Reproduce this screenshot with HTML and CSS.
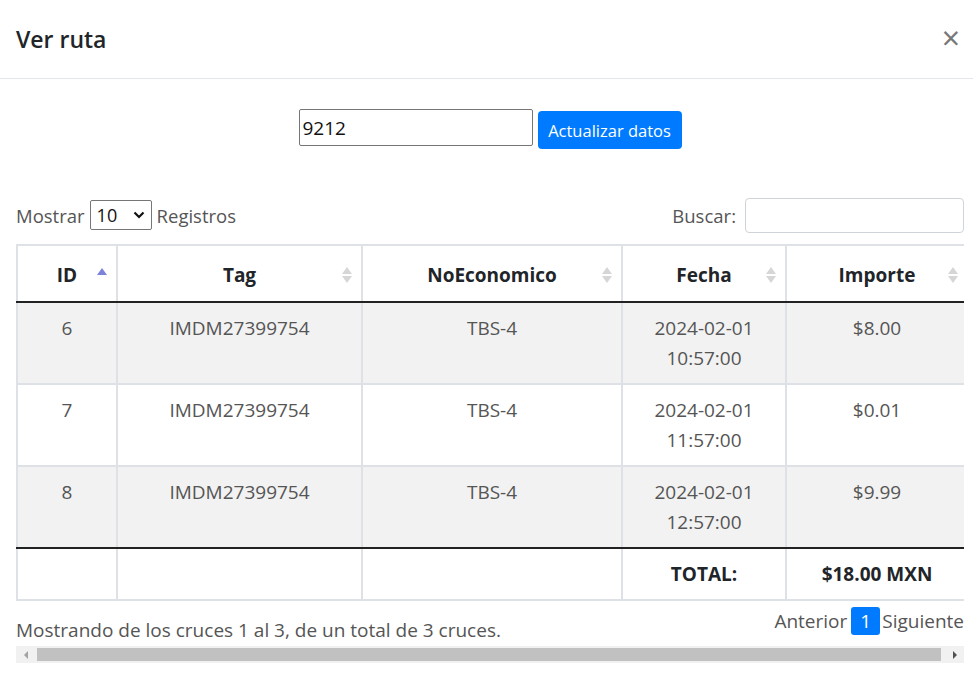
FILE: index.html
```html
<!DOCTYPE html>
<html lang="es">
<head>
<meta charset="utf-8">
<title>Ver ruta</title>
<link rel="stylesheet" href="styles.css">
</head>
<body>
<div class="modal">
  <div class="modal-header">
    <h5 class="modal-title">Ver ruta</h5>
    <span class="close">&times;</span>
  </div>
  <div class="modal-body">
    <div class="search-row">
      <input class="route-input" type="text" value="9212">
      <button class="btn-primary">Actualizar datos</button>
    </div>
    <div class="dt-wrapper">
      <div class="dt-inner">
        <div class="dt-controls">
          <label class="dt-length">Mostrar
            <span class="fake-select">10
              <svg class="chev" width="12" height="8" viewBox="0 0 12 8"><path d="M1.5 1.5 L6 6 L10.5 1.5" fill="none" stroke="#111" stroke-width="2.2"/></svg>
            </span>
            Registros</label>
          <label class="dt-filter">Buscar: <input class="filter-input" type="text"></label>
        </div>
        <table class="dt-table">
          <colgroup>
            <col class="c-id"><col class="c-tag"><col class="c-eco"><col class="c-fecha"><col class="c-imp">
          </colgroup>
          <thead>
            <tr>
              <th>ID<span class="sort"><span class="up active"></span></span></th>
              <th>Tag<span class="sort"><span class="up"></span><span class="down"></span></span></th>
              <th>NoEconomico<span class="sort"><span class="up"></span><span class="down"></span></span></th>
              <th>Fecha<span class="sort"><span class="up"></span><span class="down"></span></span></th>
              <th>Importe<span class="sort"><span class="up"></span><span class="down"></span></span></th>
            </tr>
          </thead>
          <tbody>
            <tr class="odd"><td>6</td><td>IMDM27399754</td><td>TBS-4</td><td>2024-02-01<br>10:57:00</td><td>$8.00</td></tr>
            <tr class="even"><td>7</td><td>IMDM27399754</td><td>TBS-4</td><td>2024-02-01<br>11:57:00</td><td>$0.01</td></tr>
            <tr class="odd last"><td>8</td><td>IMDM27399754</td><td>TBS-4</td><td>2024-02-01<br>12:57:00</td><td>$9.99</td></tr>
          </tbody>
          <tfoot>
            <tr><th></th><th></th><th></th><th>TOTAL:</th><th>$18.00 MXN</th></tr>
          </tfoot>
        </table>
        <div class="dt-bottom">
          <div class="dt-info">Mostrando de los cruces 1 al 3, de un total de 3 cruces.</div>
          <div class="dt-paginate">
            <span class="pg-link">Anterior</span><span class="pg-current">1</span><span class="pg-link">Siguiente</span>
          </div>
        </div>
      </div>
      <div class="scrollbar">
        <span class="sb-arrow left"></span>
        <span class="sb-thumb"></span>
        <span class="sb-arrow right"></span>
      </div>
    </div>
  </div>
</div>
</body>
</html>
```
FILE: styles.css
```css
* { box-sizing: border-box; }
body {
  margin: 0;
  background: #fff;
  font-family: "Open Sans", "Noto Sans", sans-serif;
  color: #212529;
}
.modal { width: 973px; }
.modal-header {
  display: flex;
  justify-content: space-between;
  align-items: center;
  height: 79px;
  padding: 0 13px 0 16px;
  border-bottom: 1px solid #e3e6ea;
}
.modal-title {
  margin: 0;
  font-size: 23px;
  font-weight: 600;
  color: #212529;
}
.close {
  font-size: 32px;
  font-weight: 400;
  color: #777;
  line-height: 1;
  margin-top: -3px;
}
.modal-body { padding: 30px 9px 15px 16px; }
.search-row {
  display: flex;
  justify-content: center;
  align-items: flex-start;
  gap: 5px;
}
.route-input {
  width: 234px;
  height: 37px;
  border: 1px solid #767676;
  border-radius: 2px;
  padding: 0 3px;
  font-family: inherit;
  font-size: 19px;
  color: #111;
}
.btn-primary {
  margin-top: 2px;
  width: 144px;
  height: 38px;
  background: #007bff;
  color: #fff;
  border: none;
  border-radius: 4px;
  font-family: inherit;
  font-size: 16.5px;
  padding: 0;
}
.dt-wrapper { width: 948px; margin-top: 48px; }
.dt-inner { overflow: hidden; }
.dt-controls {
  display: flex;
  justify-content: space-between;
  align-items: center;
  height: 36px;
  font-size: 18.5px;
  color: #555;
}
.dt-length { display: flex; align-items: center; gap: 5px; }
.fake-select {
  display: inline-flex;
  align-items: center;
  justify-content: space-between;
  width: 62px;
  height: 30px;
  border: 1px solid #767676;
  border-radius: 2px;
  padding: 0 6px 0 6px;
  color: #111;
  font-size: 18px;
}
.dt-filter { display: flex; align-items: center; gap: 9px; }
.filter-input {
  width: 219px;
  height: 35px;
  border: 1px solid #ced4da;
  border-radius: 4px;
}
.dt-table {
  margin-top: 11px;
  border-collapse: collapse;
  table-layout: fixed;
  width: 951px;
  font-size: 19px;
  line-height: 30px;
}
.c-id { width: 100px; }
.c-tag { width: 245px; }
.c-eco { width: 260px; }
.c-fecha { width: 164px; }
.c-imp { width: 182px; }
.dt-table th, .dt-table td {
  border: 2px solid #dee2e6;
  text-align: center;
  vertical-align: top;
}
.dt-table thead th {
  position: relative;
  padding: 14px 10px 11px;
  font-weight: 700;
  color: #212529;
  border-bottom: 2px solid #222;
}
.dt-table td {
  padding: 10px 10px 10px;
  color: #555;
}
.dt-table tr.odd td { background: #f2f2f2; }
.dt-table tr.last td { border-bottom: 2px solid #222; }
.dt-table tfoot th {
  padding: 10px 10px 10px;
  font-weight: 700;
  border-top: 2px solid #222;
}
.sort {
  position: absolute;
  right: 9px;
  top: 20px;
  width: 10px;
  height: 18px;
}
.sort .up, .sort .down {
  position: absolute;
  left: 0;
  width: 0;
  height: 0;
  border-left: 5px solid transparent;
  border-right: 5px solid transparent;
}
.sort .up { top: 1px; border-bottom: 7px solid #d6d6d6; }
.sort .down { top: 10px; border-top: 7px solid #d6d6d6; }
.sort .up.active { top: 2px; border-bottom-color: #7d82d9; }
.dt-bottom {
  display: flex;
  justify-content: space-between;
  align-items: flex-start;
  padding-top: 6px;
  height: 45px;
  font-size: 19px;
  color: #555;
}
.dt-info { padding-top: 10px; }
.dt-paginate { display: flex; align-items: center; gap: 2px; }
.pg-current {
  display: inline-flex;
  align-items: center;
  justify-content: center;
  width: 29px;
  height: 28px;
  background: #007bff;
  color: #fff;
  border-radius: 3px;
  margin-left: 2px;
}
.scrollbar {
  position: relative;
  height: 17px;
  background: #f1f1f1;
  display: flex;
  align-items: center;
}
.sb-thumb {
  position: absolute;
  left: 21px;
  right: 23px;
  top: 2px;
  bottom: 2px;
  background: #c1c1c1;
}
.sb-arrow {
  position: absolute;
  top: 5px;
  width: 0;
  height: 0;
  border-top: 4px solid transparent;
  border-bottom: 4px solid transparent;
}
.sb-arrow.left { left: 8px; border-right: 4px solid #a3a3a3; }
.sb-arrow.right { right: 7px; border-left: 4px solid #505050; }
```
